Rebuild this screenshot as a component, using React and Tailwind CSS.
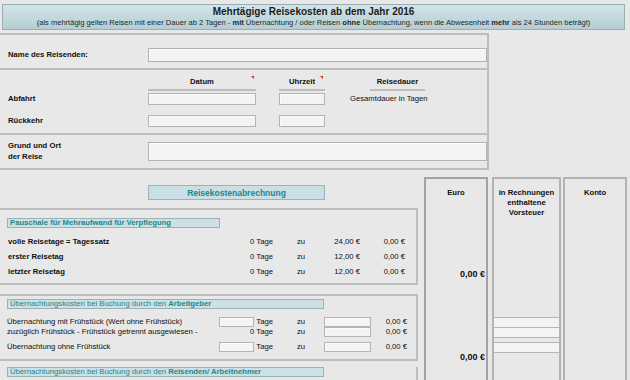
import clsx from 'clsx'

const Field = ({ className }) => (
  <div className={clsx('border border-[#b3b3b3] bg-[#f3f3f3] shadow-[inset_1px_1px_0_#fbfbfb]', className)} />
)

const HeadCell = ({ className, mark, children }) => (
  <div className={clsx('relative flex items-end justify-center border-b-2 border-[#bdbdbd] pb-[2px]', className)}>
    {children}
    {mark && (
      <span className="absolute right-[2px] top-[6px] h-0 w-0 border-l-[3px] border-t-[3px] border-l-transparent border-t-[#d3301f]" />
    )}
  </div>
)

const Tag = ({ className, children }) => (
  <div className={clsx('flex h-[10px] items-center border border-[#9ab3b9] bg-[#cce0e5] pl-[2px] leading-[8px] text-[#1f8789]', className)}>
    {children}
  </div>
)

const Rate = ({ label, rate }) => (
  <div className="flex h-[15px] items-center">
    <span className="w-[240px] pl-[8px] font-bold">{label}</span>
    <span className="w-[33px] text-right">0 Tage</span>
    <span className="w-[44px] pl-[24px]">zu</span>
    <span className="w-[43px] text-right">{rate}</span>
    <span className="w-[45px] text-right">0,00 €</span>
  </div>
)

const Night = ({ label, days, className }) => (
  <div className={clsx('flex h-[10px] items-center', className)}>
    <span className="w-[219px] pl-[7px]">{label}</span>
    <div className="flex w-[54px] items-center">
      {days ? (
        <span className="w-full text-right">0 Tage</span>
      ) : (
        <>
          <Field className="h-[10px] w-[36px]" />
          <span className="ml-[2px]">Tage</span>
        </>
      )}
    </div>
    <span className="w-[51px] pl-[24px]">zu</span>
    <Field className="h-[10px] w-[47px]" />
    <span className="w-[36px] text-right">0,00 €</span>
  </div>
)

export default function App() {
  return (
    <div className="h-[380px] w-[630px] overflow-hidden bg-[#e8e8e8] pt-[4px] font-['Liberation_Sans',Arial,sans-serif] text-[7.7px] leading-[10px] text-[#0f0f0f]">
      {/* Kopfzeile */}
      <div className="ml-[2px] flex h-[26px] w-[623px] flex-col items-center border border-[#98b0b5] bg-gradient-to-b from-[#d2e4e8] to-[#b4ced4] pt-[1px]">
        <p className="text-[10px] font-bold leading-[12px] text-[#1c1c1c]">Mehrtägige Reisekosten ab dem Jahr 2016</p>
        <p className="text-[7.55px] leading-[10px] text-[#262626]">
          (als mehrtägig gelten Reisen mit einer Dauer ab 2 Tagen - <b>mit</b> Übernachtung / oder Reisen <b>ohne</b> Übernachtung, wenn die Abwesenheit <b>mehr</b> als 24 Stunden beträgt)
        </p>
      </div>

      {/* Stammdaten */}
      <div className="mt-[3px] w-[489px] border-b-2 border-r-2 border-t-2 border-[#bdbdbd]">
        <div className="flex items-center pb-[6px] pt-[13px]">
          <span className="w-[148px] pl-[8px] font-bold">Name des Reisenden:</span>
          <Field className="h-[14px] flex-1" />
        </div>

        <div className="border-t-2 border-[#bdbdbd] pb-[6px]">
          <div className="flex h-[21px] font-bold">
            <div className="w-[148px]" />
            <HeadCell className="w-[108px]" mark>Datum</HeadCell>
            <div className="w-[23px]" />
            <HeadCell className="w-[46px]" mark>Uhrzeit</HeadCell>
            <div className="w-[45px]" />
            <HeadCell className="w-[55px]">Reisedauer</HeadCell>
          </div>
          <div className="mt-[2px] flex h-[12px] items-center">
            <span className="w-[148px] pl-[8px] font-bold">Abfahrt</span>
            <Field className="h-full w-[108px]" />
            <div className="w-[23px]" />
            <Field className="h-full w-[46px]" />
            <span className="ml-[25px]">Gesamtdauer in Tagen</span>
          </div>
          <div className="mt-[10px] flex h-[12px] items-center">
            <span className="w-[148px] pl-[8px] font-bold">Rückkehr</span>
            <Field className="h-full w-[108px]" />
            <div className="w-[23px]" />
            <Field className="h-full w-[46px]" />
          </div>
        </div>

        <div className="flex items-start border-t-2 border-[#bdbdbd] pb-[6px] pt-[5px]">
          <span className="w-[148px] pl-[8px] font-bold leading-[11px]">
            Grund und Ort
            <br />
            der Reise
          </span>
          <Field className="mt-[2px] h-[19px] flex-1" />
        </div>
      </div>

      {/* Abrechnung */}
      <div className="flex">
        <div className="w-[418px] shrink-0">
          <div className="ml-[148px] mt-[15px] flex h-[15px] w-[177px] items-center justify-center border border-[#9ab3b9] bg-[#c9dfe5] text-[8.5px] font-bold text-[#1f8789]">
            Reisekostenabrechnung
          </div>

          <div className="mt-[8px] border-b-2 border-r-2 border-t-2 border-[#bdbdbd] pb-[4px]">
            <Tag className="ml-[7px] mt-[8px] w-[213px] font-bold">Pauschale für Mehraufwand für Verpflegung</Tag>
            <div className="mt-[6px]">
              <Rate label="volle Reisetage = Tagessatz" rate="24,00 €" />
              <Rate label="erster Reisetag" rate="12,00 €" />
              <Rate label="letzter Reisetag" rate="12,00 €" />
            </div>
          </div>

          <div className="mt-[9px] border-b-2 border-r-2 border-t-2 border-[#bdbdbd] pb-[7px]">
            <Tag className="ml-[7px] mt-[3px] w-[317px]">
              Übernachtungskosten bei Buchung durch den&nbsp;<b>Arbeitgeber</b>
            </Tag>
            <Night className="mt-[8px]" label="Übernachtung mit Frühstück (Wert ohne Frühstück)" />
            <Night label="zuzüglich Frühstück - Frühstück getrennt ausgewiesen -" days />
            <Night className="mt-[5px]" label="Übernachtung ohne Frühstück" />
          </div>

          <div className="h-[40px] border-r-2 border-[#bdbdbd]">
            <Tag className="ml-[7px] mt-[6px] w-[317px]">
              Übernachtungskosten bei Buchung durch den&nbsp;<b>Reisenden/ Arbeitnehmer</b>
            </Tag>
          </div>
        </div>

        {/* Spalten rechts */}
        <div className="ml-[6px] mt-[7px] flex font-bold">
          <div className="flex h-[220px] w-[64px] flex-col border-2 border-[#a3a3a3] pt-[9px]">
            <p className="text-center">Euro</p>
            <p className="mt-[71px] pr-[1px] text-right text-[9px]">0,00 €</p>
            <p className="mt-[73px] pr-[1px] text-right text-[9px]">0,00 €</p>
          </div>
          <div className="ml-[4px] h-[220px] w-[69px] border-2 border-[#b3b3b3] pt-[9px]">
            <p className="text-center">
              in Rechnungen
              <br />
              enthaltene
              <br />
              Vorsteuer
            </p>
            <div className="mt-[99px]">
              <div className="h-[10px] border-t border-[#b5b5b5] bg-[#f3f3f3]" />
              <div className="h-[10px] border-t border-[#b5b5b5] bg-[#f3f3f3]" />
              <div className="h-[5px] border-t border-[#b5b5b5]" />
              <div className="h-[11px] border-y border-[#b5b5b5] bg-[#f3f3f3]" />
            </div>
          </div>
          <div className="ml-[2px] h-[220px] w-[64px] border-2 border-[#b3b3b3] pt-[9px]">
            <p className="text-center">Konto</p>
          </div>
        </div>
      </div>
    </div>
  )
}
